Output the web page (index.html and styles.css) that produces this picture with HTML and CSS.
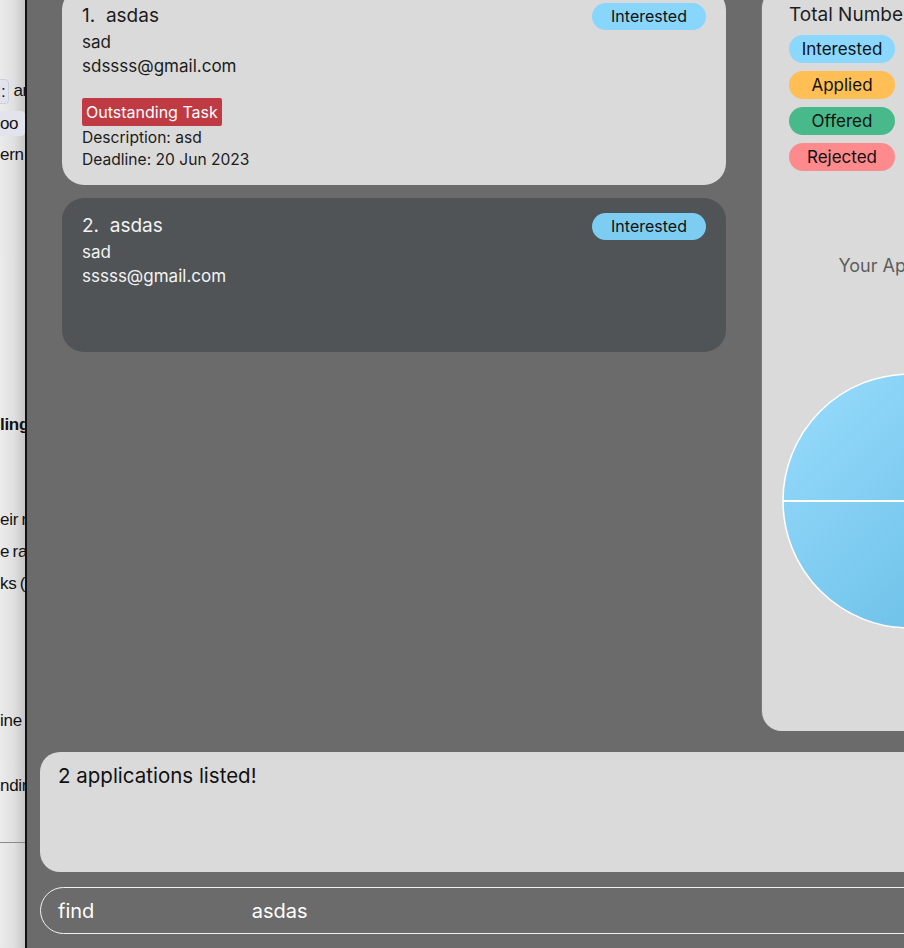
FILE: index.html
```html
<!DOCTYPE html>
<html>
<head>
<meta charset="utf-8">
<link rel="stylesheet" href="styles.css">
</head>
<body>
<div class="screen">
  <aside class="backwin">
    <div class="bw-line first"><span class="chip chip-short">:</span><span class="bw-text">ar</span></div>
    <div class="bw-line"><span class="chip chip-full">Goo</span></div>
    <div class="bw-line">ern</div>
    <div class="bw-line bold gap-a">lings</div>
    <div class="bw-line gap-b">eir ro</div>
    <div class="bw-line">e ra</div>
    <div class="bw-line">ks (a</div>
    <div class="bw-line gap-c">ine</div>
    <div class="bw-line gap-d">ndin</div>
    <div class="bw-rule"></div>
  </aside>

  <main class="app">
    <section class="top">
      <div class="list">
        <article class="card light">
          <div class="card-head">
            <div class="card-title">1.&nbsp; asdas</div>
            <span class="status status-card">Interested</span>
          </div>
          <div class="card-line">sad</div>
          <div class="card-line">sdssss@gmail.com</div>
          <span class="task-badge">Outstanding Task</span>
          <div class="task-line first-task">Description: asd</div>
          <div class="task-line">Deadline: 20 Jun 2023</div>
        </article>
        <article class="card dark">
          <div class="card-head">
            <div class="card-title">2.&nbsp; asdas</div>
            <span class="status status-card dim">Interested</span>
          </div>
          <div class="card-line">sad</div>
          <div class="card-line">sssss@gmail.com</div>
        </article>
      </div>

      <aside class="stats">
        <div class="stats-title">Total Number of Applications</div>
        <div class="stat-row"><span class="status stat interested">Interested</span><span class="count">2</span></div>
        <div class="stat-row"><span class="status stat applied">Applied</span><span class="count">0</span></div>
        <div class="stat-row"><span class="status stat offered">Offered</span><span class="count">0</span></div>
        <div class="stat-row"><span class="status stat rejected">Rejected</span><span class="count">0</span></div>
        <div class="chart">
          <div class="chart-title">Your Applications</div>
          <svg class="pie" width="256" height="258" viewBox="0 0 256 258">
            <defs>
              <linearGradient id="pieg" x1="0" y1="0" x2="1" y2="1">
                <stop offset="0" stop-color="#99dcfd"/>
                <stop offset="1" stop-color="#62bae3"/>
              </linearGradient>
            </defs>
            <circle cx="128" cy="128" r="127" fill="url(#pieg)" stroke="#ffffff" stroke-width="1.5"/>
            <line x1="1" y1="128" x2="128" y2="128" stroke="#ffffff" stroke-width="2"/>
          </svg>
        </div>
      </aside>
    </section>

    <section class="result">2 applications listed!</section>

    <div class="command">find                            asdas</div>
  </main>
</div>
</body>
</html>
```

FILE: styles.css
```css
html, body {
  margin: 0;
  padding: 0;
  height: 100%;
  overflow: hidden;
}

body {
  background: #6b6b6b;
}

.screen {
  display: flex;
  height: 948px;
  width: 904px;
  overflow: hidden;
}

/* background window strip on the left */
.backwin {
  flex: 0 0 25px;
  width: 25px;
  border-right: 2px solid #111;
  background: linear-gradient(to right, #ebebeb 0%, #e0e0e0 55%, #c6c6c6 100%);
  overflow: hidden;
  font-family: "Liberation Sans", Arial, sans-serif;
  font-size: 17px;
  letter-spacing: -0.3px;
  word-spacing: -1px;
  color: #111;
  display: flex;
  flex-direction: column;
}

.bw-line {
  height: 32px;
  line-height: 32px;
  white-space: nowrap;
  display: flex;
  align-items: center;
}

.bw-line.first {
  margin-top: 75px;
}

.bw-line.bold {
  font-weight: bold;
}

.gap-a { margin-top: 238px; }
.gap-b { margin-top: 63px; }
.gap-c { margin-top: 105px; }
.gap-d { margin-top: 33px; }

.chip {
  display: inline-block;
  height: 25px;
  line-height: 25px;
  background: #e3e3ee;
  border-radius: 4px;
}

.chip-short {
  margin-left: -14px;
  padding: 0 3px 0 14px;
  border: 1px solid #cfcfdc;
  height: 23px;
  line-height: 23px;
}

.bw-text {
  margin-left: 4px;
}

.chip-full {
  margin-left: -13px;
  padding: 0 6px 0 0;
  width: 50px;
}

.bw-rule {
  margin-top: 40px;
  height: 1px;
  background: #8a8a8a;
}

/* main app */
.app {
  flex: 1 0 auto;
  width: 877px;
  padding-left: 13px;
  font-family: Inter, "Noto Sans", sans-serif;
  display: flex;
  flex-direction: column;
}

.top {
  display: flex;
  gap: 36px;
  margin-top: -12px;
  margin-left: 22px;
  height: 743px;
}

.list {
  flex: 0 0 664px;
  display: flex;
  flex-direction: column;
  gap: 13px;
}

.card {
  border-radius: 22px;
  padding: 16px 20px 14px 20px;
  display: flex;
  flex-direction: column;
  align-items: flex-start;
}

.card.light {
  background: #dadada;
  color: #1c1c1c;
}

.card.dark {
  background: #505457;
  color: #f3f3f3;
  padding-bottom: 64px;
}

.card-head {
  display: flex;
  align-items: center;
  justify-content: space-between;
  align-self: stretch;
  height: 24px;
  margin-bottom: 2px;
}

.card-title {
  font-size: 19px;
  line-height: 24px;
}

.card-line {
  font-size: 17px;
  line-height: 24px;
}

.status {
  display: inline-flex;
  align-items: center;
  justify-content: center;
  border-radius: 14px;
  color: #111;
}

.status-card {
  width: 114px;
  height: 27px;
  font-size: 16px;
  background: #88d6fc;
}

.status-card.dim {
  background: #7dcdf3;
}

.task-badge {
  margin-top: 20px;
  height: 28px;
  line-height: 28px;
  padding: 0 4px;
  background: #bf3a43;
  color: #fff;
  font-size: 16px;
  border-radius: 2px;
}

.task-line {
  font-size: 15.6px;
  line-height: 22px;
}

.task-line.first-task {
  margin-top: 1px;
}

/* stats panel */
.stats {
  flex: 0 0 420px;
  background: #dadada;
  border-radius: 20px;
  padding: 15px 0 0 27px;
  box-sizing: border-box;
  display: flex;
  flex-direction: column;
  align-items: flex-start;
  box-shadow: -1px 0 0 #7a7a7a;
}

.stats-title {
  font-size: 19px;
  line-height: 24px;
  color: #1e1e1e;
  white-space: nowrap;
}

.stat-row {
  display: flex;
  align-items: center;
  gap: 20px;
  margin-top: 8px;
}

.stat-row:first-of-type {
  margin-top: 6px;
}

.stat {
  width: 106px;
  height: 28px;
  font-size: 17px;
}

.interested { background: #8ad8ff; }
.applied { background: #ffbf55; }
.offered { background: #48b98a; }
.rejected { background: #ff8a8e; }

.count {
  font-size: 17px;
  color: #1e1e1e;
}

.chart {
  margin-left: -7px;
  width: 256px;
  display: flex;
  flex-direction: column;
  align-items: center;
}

.chart-title {
  margin-top: 83px;
  margin-left: 6px;
  font-size: 18px;
  line-height: 24px;
  color: #5e5e5e;
  white-space: nowrap;
}

.pie {
  display: block;
  margin-top: 95px;
}

/* result display */
.result {
  margin-top: 21px;
  height: 120px;
  box-sizing: border-box;
  background: #dadada;
  border-radius: 20px;
  padding: 12px 18px;
  font-size: 20.5px;
  line-height: 24px;
  color: #111;
  width: 900px;
}

/* command box */
.command {
  margin-top: 15px;
  height: 47px;
  box-sizing: border-box;
  border: 1.5px solid #f2f2f2;
  border-radius: 24px;
  padding: 0 17px;
  display: flex;
  align-items: center;
  font-size: 20px;
  color: #ffffff;
  white-space: pre;
  width: 900px;
}
```
